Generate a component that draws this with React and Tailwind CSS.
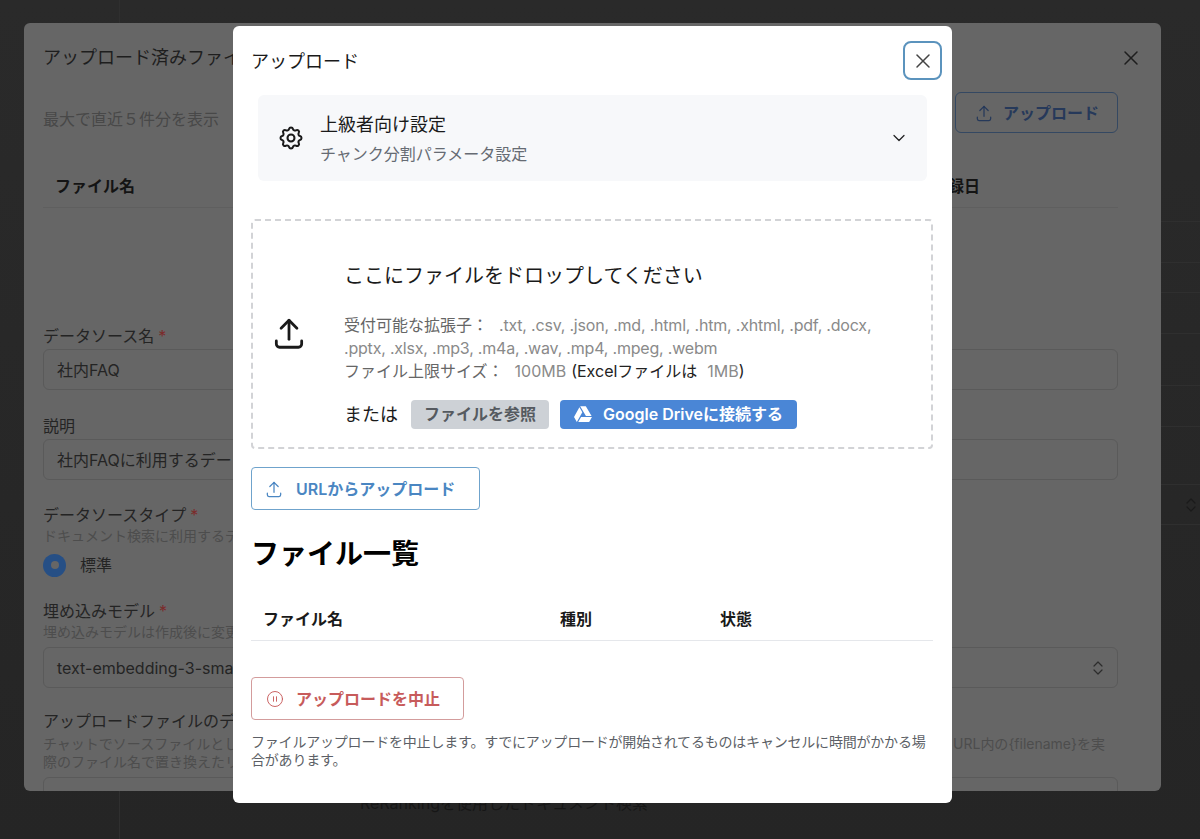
import React from 'react';
import { X, ChevronDown, CirclePause } from 'lucide-react';
import { TbSettings, TbUpload } from 'react-icons/tb';
import { FaGoogleDrive } from 'react-icons/fa';

const font = { fontFamily: 'Inter, "Noto Sans CJK JP", sans-serif' };

const UpDown = ({ className }) => (
  <svg viewBox="0 0 12 16" fill="none" stroke="currentColor" strokeWidth="1.2" strokeLinecap="round" strokeLinejoin="round" className={className}>
    <path d="M2 6 6 2l4 4M2 10l4 4 4-4" />
  </svg>
);

const BackPage = () => (
  <div className="absolute inset-0 flex bg-linear-to-b from-[#2a2a2a] to-[#252525]">
    <div className="w-[120px] border-r border-[#2f2f2f]" />
    <div className="flex flex-1 flex-col pt-[221px]">
      <div className="h-[41px] border-t border-[#2f2f2f]" />
      <div className="h-[30px] border-t border-[#2f2f2f]" />
      <div className="h-[41px] border-t border-[#2f2f2f]" />
      <div className="h-[52px] border-t border-[#2f2f2f]" />
      <div className="h-[41px] border-t border-[#2f2f2f]" />
      <div className="h-[58px] border-t border-[#2f2f2f]" />
      <div className="flex h-[41px] items-center justify-end border-y border-[#2f2f2f] pr-[3px]">
        <UpDown className="h-4 w-3 text-[#1a1a1a]" />
      </div>
      <p className="mt-[268px] pl-[240px] text-[16px] leading-5 text-[#161616]">ReRankingを使用したドキュメント検索</p>
    </div>
  </div>
);

const Field = ({ label, required, help, helpClassName, children, className }) => (
  <div className={className}>
    <p className="text-[16px] leading-[20px] text-[#242424]">
      {label}
      {required && <span className="ml-1 text-[#7c2b2b]">*</span>}
    </p>
    {help && <div className={`text-[14px] leading-[18px] text-[#4d4d4d] ${helpClassName}`}>{help}</div>}
    {children}
  </div>
);

const BackInput = ({ value, select, className }) => (
  <div className={`flex h-[41px] items-center justify-between rounded-md border border-[#5a5a5a] px-[13px] text-[16px] text-[#242424] ${className}`}>
    <span>{value}</span>
    {select && <UpDown className="h-4 w-3 text-[#2c2c2c]" />}
  </div>
);

const BackDialog = () => (
  <div className="absolute left-[24px] top-[23px] flex h-[768px] w-[1137px] flex-col rounded-md bg-[#666666] pl-[19px] pr-[43px]">
    <div className="mt-[23px] flex items-center justify-between">
      <h2 className="text-[18px] leading-[24px] text-[#1e1e1e]">アップロード済みファイル</h2>
      <X className="-mr-[25px] h-6 w-6 text-[#1e1e1e]" strokeWidth={1.5} />
    </div>
    <div className="mt-[22px] flex items-center justify-between">
      <p className="mt-[13px] text-[16px] text-[#484848]">最大で直近５件分を表示</p>
      <button className="flex h-[41px] w-[163px] items-center justify-center gap-[9px] rounded-md border border-[#344862] text-[16px] font-semibold text-[#26395a]">
        <TbUpload className="h-5 w-5" strokeWidth={1.5} />
        アップロード
      </button>
    </div>
    <div className="mt-[32px] flex h-[43px] items-center justify-between border-b border-[#5f5f5f] pl-[12px] text-[16px] font-bold text-[#141414]">
      <span>ファイル名</span>
      <span className="mr-[138px]">登録日</span>
    </div>
    <div className="min-h-0 flex-1 overflow-hidden pb-[3px]">
      <Field label="データソース名" required className="mt-[118px]">
        <BackInput value="社内FAQ" className="mt-[3px]" />
      </Field>
      <Field label="説明" className="mt-[26px]">
        <BackInput value="社内FAQに利用するデータソース" className="mt-[3px]" />
      </Field>
      <Field
        label="データソースタイプ"
        required
        help="ドキュメント検索に利用するデータソースのタイプを選択します"
        helpClassName="mt-[2px]"
        className="mt-[25px]"
      >
        <div className="mt-[8px] flex items-center gap-[14px] text-[16px] text-[#242424]">
          <span className="flex h-[23px] w-[23px] items-center justify-center rounded-full bg-[#264f85]">
            <span className="h-[8px] w-[8px] rounded-full bg-[#666666]" />
          </span>
          標準
        </div>
      </Field>
      <Field
        label="埋め込みモデル"
        required
        help="埋め込みモデルは作成後に変更できません"
        helpClassName="mt-[2px]"
        className="mt-[24px]"
      >
        <BackInput value="text-embedding-3-small" select className="mt-[6px]" />
      </Field>
      <Field
        label="アップロードファイルのデフォルトURL"
        help={
          <>
            <div className="flex justify-between pr-[13px]">
              <span>チャットでソースファイルとして表示するURLを指定します。</span>
              <span>URL内の{'{filename}'}を実</span>
            </div>
            <div>際のファイル名で置き換えたリンクが表示されます</div>
          </>
        }
        helpClassName="mt-[4px]"
        className="mt-[23px]"
      >
        <div className="mt-[6px] h-[41px] rounded-md border border-[#5a5a5a]" />
      </Field>
    </div>
  </div>
);

const UploadModal = () => (
  <div className="absolute left-[233px] top-[26px] h-[777px] w-[719px] rounded-md bg-white pl-[18px] pr-[19px] text-[#1a1a1a]">
    <div className="flex items-start justify-between">
      <h2 className="mt-[24px] text-[18px] leading-6">アップロード</h2>
      <button className="mr-[-9px] mt-[15px] flex h-[39px] w-[39px] items-center justify-center rounded-lg border-2 border-[#5b93bd] text-[#444444]">
        <X className="h-6 w-6" strokeWidth={1.5} />
      </button>
    </div>

    <div className="ml-[7px] mr-[6px] mt-[15px] flex h-[86px] items-center rounded-md bg-[#f7f8fa] pl-[19px] pr-[18px]">
      <TbSettings className="h-7 w-7 text-[#1a1a1a]" strokeWidth={1.75} />
      <div className="ml-[15px] flex-1">
        <p className="text-[18px] leading-[26px] text-[#1a1a1a]">上級者向け設定</p>
        <p className="mt-[5px] text-[16px] leading-[22px] text-[#666b73]">チャンク分割パラメータ設定</p>
      </div>
      <ChevronDown className="h-5 w-5 text-[#222222]" strokeWidth={1.5} />
    </div>

    <div className="mt-[38px] flex h-[230px] items-center rounded border-2 border-dashed border-[#d2d3d6] pl-[17px] pr-[38px]">
      <TbUpload className="mb-[3px] h-[38px] w-[38px] shrink-0 text-[#1a1a1a]" strokeWidth={1.75} />
      <div className="ml-[36px] flex-1 pt-[22px]">
        <p className="text-[20px] leading-[28px] text-[#1a1a1a]">ここにファイルをドロップしてください</p>
        <div className="mt-[24px] text-[16px] leading-[23px] text-[#666666]">
          <p>
            受付可能な拡張子：<span className="ml-[11px] tracking-[-0.2px] text-[#8a8a8a]">.txt, .csv, .json, .md, .html, .htm, .xhtml, .pdf, .docx, .pptx, .xlsx, .mp3, .m4a, .wav, .mp4, .mpeg, .webm</span>
          </p>
          <p>
            ファイル上限サイズ：<span className="ml-[11px] text-[#8a8a8a]">100MB</span>
            <span className="ml-[5px] text-[#222222]">(Excelファイルは</span>
            <span className="ml-[10px] text-[#8a8a8a]">1MB</span>
            <span className="text-[#222222]">)</span>
          </p>
        </div>
        <div className="mt-[17px] flex items-center">
          <span className="text-[18px] text-[#1a1a1a]">または</span>
          <button className="ml-[13px] h-[29px] w-[138px] rounded bg-[#cdd1d6] text-[16px] font-semibold text-[#555a60]">ファイルを参照</button>
          <button className="ml-[11px] flex h-[29px] w-[237px] items-center justify-center gap-[11px] rounded bg-[#4a86d6] text-[16px] font-semibold text-white">
            <FaGoogleDrive className="h-[18px] w-[18px]" />
            Google Driveに接続する
          </button>
        </div>
      </div>
    </div>

    <button className="mt-[18px] flex h-[43px] w-[229px] items-center rounded border border-[#6fa3cc] pl-[12px] text-[16px] font-semibold text-[#4a86c2]">
      <TbUpload className="h-5 w-5" strokeWidth={1.5} />
      <span className="ml-[12px]">URLからアップロード</span>
    </button>

    <h2 className="mt-[24px] text-[28px] font-bold leading-[40px] text-black">ファイル一覧</h2>

    <div className="mt-[34px] flex h-[33px] items-start border-b border-[#e5e7eb] text-[16px] font-semibold leading-[22px] text-[#1a1a1a]">
      <span className="ml-[12px] w-[297px]">ファイル名</span>
      <span className="w-[160px]">種別</span>
      <span>状態</span>
    </div>

    <button className="mt-[36px] flex h-[43px] w-[213px] items-center rounded border border-[#d39c9c] pl-[14px] text-[16px] font-semibold text-[#c75b5b]">
      <CirclePause className="h-[18px] w-[18px]" strokeWidth={1.25} />
      <span className="ml-[12px]">アップロードを中止</span>
    </button>
    <p className="mt-[13px] text-[14px] leading-[18px] tracking-[-0.2px] text-[#5c5f66]">ファイルアップロードを中止します。すでにアップロードが開始されてるものはキャンセルに時間がかかる場合があります。</p>
  </div>
);

const App = () => (
  <div className="relative h-[839px] w-full overflow-hidden" style={font}>
    <BackPage />
    <BackDialog />
    <UploadModal />
  </div>
);

export default App;
